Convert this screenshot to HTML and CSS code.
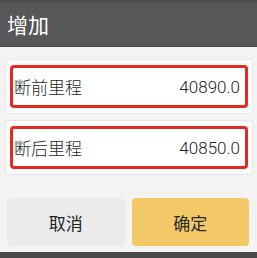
FILE: index.html
```html
<!DOCTYPE html>
<html lang="zh">
<head>
  <meta charset="UTF-8">
  <meta name="viewport" content="width=device-width, initial-scale=1.0">
  <title>增加</title>
  <link rel="stylesheet" href="styles.css">
</head>
<body>
  <div class="dialog">
    <div class="title">增加</div>

    <div class="fields">
      <div class="card">
        <div class="field">
          <span class="label">断前里程</span>
          <span class="value">40890.0</span>
        </div>
      </div>
      <div class="card">
        <div class="field">
          <span class="label">断后里程</span>
          <span class="value">40850.0</span>
        </div>
      </div>
    </div>

    <div class="buttons">
      <button class="btn cancel">取消</button>
      <button class="btn ok">确定</button>
    </div>
  </div>
  <div class="bottom-bar"></div>
</body>
</html>
```

FILE: styles.css
```css
body {
  margin: 0;
  width: 257px;
  height: 258px;
  overflow: hidden;
  background: #f3f3f3;
  font-family: "Noto Sans CJK SC", "Noto Sans", sans-serif;
}

.dialog {
  height: 252px;
  display: flex;
  flex-direction: column;
}

.title {
  height: 47px;
  background: #575757;
  border-top: 2px solid #4a4a4a;
  box-sizing: border-box;
  color: #fff;
  font-size: 21px;
  line-height: 44px;
  padding-left: 7px;
  border-bottom: 1px solid #444;
}

.fields {
  padding: 12px 4px 0 5px;
  display: flex;
  flex-direction: column;
  gap: 6px;
}

.card {
  background: #fbfbfb;
  border: 1px solid #e6e6e6;
  border-radius: 2px;
  padding: 5px 4px;
}

.field {
  height: 43px;
  box-sizing: border-box;
  border: 3px solid #e02a22;
  border-radius: 4px;
  background: #fff;
  display: flex;
  align-items: center;
  justify-content: space-between;
  padding: 0 5px 0 1px;
}

.label {
  font-size: 17px;
  font-weight: 300;
  color: #1e1e1e;
}

.value {
  font-family: "Roboto", "Liberation Sans", sans-serif;
  font-weight: 300;
  font-size: 17px;
  color: #222;
}

.buttons {
  margin-top: auto;
  display: flex;
  gap: 7px;
  padding: 0 8px 6px 7px;
}

.btn {
  flex: 1;
  height: 48px;
  border: none;
  border-radius: 4px;
  font-family: "Noto Sans CJK SC", sans-serif;
  font-size: 17px;
  font-weight: 400;
  color: #222;
}

.cancel {
  background: #ebebeb;
}

.ok {
  background: #f3c866;
  color: #2a2a2a;
}

.bottom-bar {
  height: 6px;
  background: #4a4a4a;
}
```
